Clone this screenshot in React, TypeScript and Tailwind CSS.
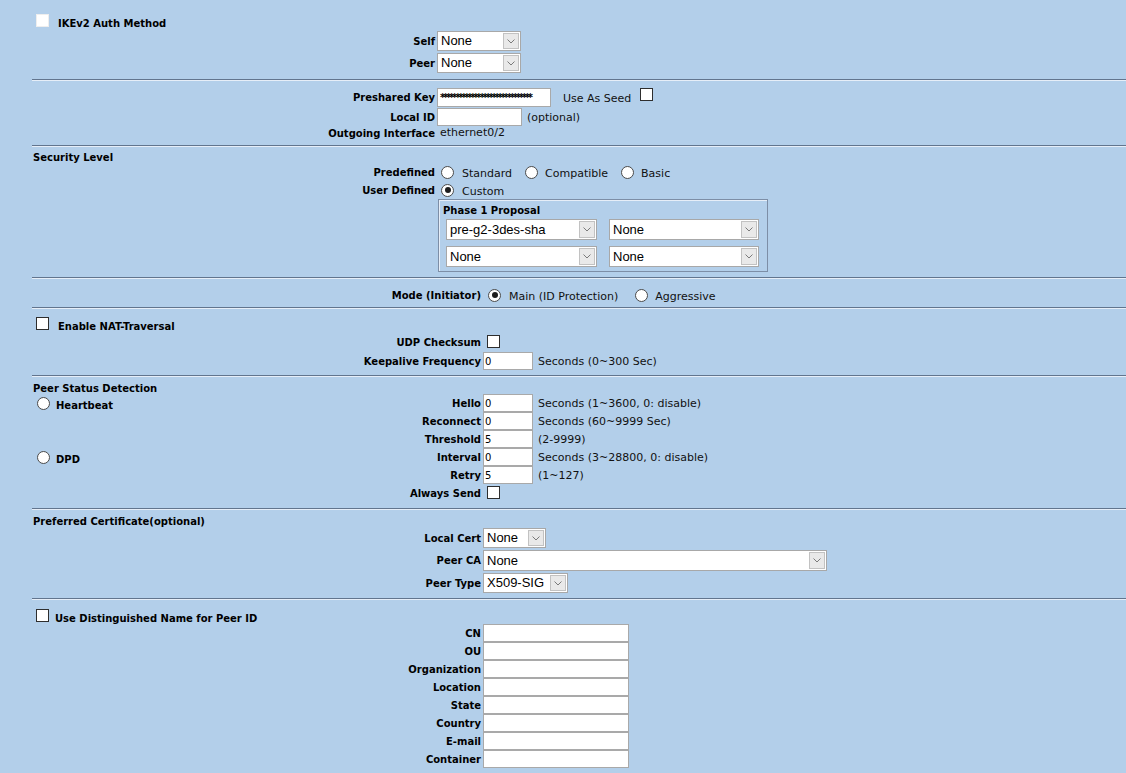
import React from "react";

const bold = "font-['DejaVu_Sans',sans-serif] font-bold text-[10px] text-black whitespace-nowrap";
const plain = "font-['DejaVu_Sans',sans-serif] text-[11px] text-[#111] whitespace-nowrap";

function Sep({ className = "" }: { className?: string }) {
  return (
    <div className={className}>
      <div className="h-px bg-[#62758e]" />
      <div className="h-px bg-[#e6eef8]" />
    </div>
  );
}

function Sel({ className, value }: { className: string; value: string }) {
  return (
    <div className={`flex items-stretch border border-[#a8a8a8] bg-white ${className}`}>
      <span className="flex flex-1 items-center overflow-hidden whitespace-nowrap pl-[3px] font-['Liberation_Sans',Arial,sans-serif] text-[13px] text-black">
        {value}
      </span>
      <span className="m-[1px] flex w-[16px] flex-none items-center justify-center border border-[#c2c2c2] bg-[#e9e9e9]">
        <svg width="8" height="5" viewBox="0 0 8 5">
          <path d="M0.5 0.5 L4 4 L7.5 0.5" stroke="#7a7a7a" fill="none" strokeWidth="1" />
        </svg>
      </span>
    </div>
  );
}

function Inp({ className, value = "" }: { className: string; value?: string }) {
  return (
    <div
      className={`flex items-center overflow-hidden border border-[#a9a9a9] bg-white pl-[1px] font-['DejaVu_Sans',sans-serif] text-[10px] text-black ${className}`}
    >
      {value}
    </div>
  );
}

function Radio({ checked = false }: { checked?: boolean }) {
  return (
    <span className="flex h-[13px] w-[13px] flex-none items-center justify-center rounded-full border border-[#4a4a4a] bg-white">
      {checked ? <span className="h-[6px] w-[6px] rounded-full bg-[#1e1e1e]" /> : null}
    </span>
  );
}

function Check({ light = false }: { light?: boolean }) {
  return (
    <span
      className={`inline-block h-[13px] w-[13px] flex-none bg-white ${light ? "border border-[#eeeeee]" : "border border-[#2e2e2e]"}`}
    />
  );
}

function Row({ label, wide = true, left, children, className = "h-[18px]" }: {
  label: string;
  wide?: boolean;
  left?: React.ReactNode;
  children?: React.ReactNode;
  className?: string;
}) {
  return (
    <div className={`flex items-center ${className}`}>
      <div className={`flex items-center justify-between ${wide ? "w-[449px]" : "w-[403px]"}`}>
        <div className="flex items-center">{left}</div>
        <span className={bold}>{label}</span>
      </div>
      {children}
    </div>
  );
}

function CheckTitle({ label, gap, className }: { label: string; gap: string; className: string }) {
  return (
    <div className={`flex items-start pl-[4px] ${className}`}>
      <Check light={label.startsWith("IKEv2")} />
      <span className={`${bold} mt-[5px] leading-none ${gap}`}>{label}</span>
    </div>
  );
}

function Note({ children }: { children: React.ReactNode }) {
  return <span className={`${plain} ml-[5px] pt-[2px]`}>{children}</span>;
}

export default function App() {
  return (
    <div className="min-h-screen overflow-hidden bg-[#b3cfea] pl-8">
      {/* IKEv2 */}
      <CheckTitle label="IKEv2 Auth Method" gap="ml-[9px]" className="mt-[14px] h-[16px]" />
      <div className="mt-[1px] flex flex-col gap-[2px]">
        <Row label="Self" wide={false} className="h-[20px]">
          <Sel className="ml-[2px] h-[20px] w-[84px]" value="None" />
        </Row>
        <Row label="Peer" wide={false} className="h-[20px]">
          <Sel className="ml-[2px] h-[20px] w-[84px]" value="None" />
        </Row>
      </div>
      <Sep className="mt-[6px]" />

      {/* preshared */}
      <div className="mt-[7px]">
        <Row label="Preshared Key" wide={false} className="h-[19px]">
          <div className="ml-[2px] flex h-[19px] w-[114px] items-center overflow-hidden border border-[#a9a9a9] bg-white pl-[2px] font-['DejaVu_Sans',sans-serif] text-[10px] font-bold leading-none tracking-[-2.2px] text-black">
            ******************************
          </div>
          <span className={`${plain} ml-[12px] pt-[4px]`}>Use As Seed</span>
          <span className="ml-[9px] mb-[5px]">
            <Check />
          </span>
        </Row>
        <Row label="Local ID" wide={false} className="mt-px h-[18px]">
          <Inp className="ml-[2px] h-[18px] w-[85px]" />
          <Note>(optional)</Note>
        </Row>
        <Row label="Outgoing Interface" wide={false} className="h-[14px]">
          <span className={`${plain} ml-[5px]`}>ethernet0/2</span>
        </Row>
      </div>
      <Sep className="mt-[5px]" />

      {/* security level */}
      <div className={`${bold} mt-[3px] flex h-[14px] items-center pl-px`}>Security Level</div>
      <Row label="Predefined" wide={false} className="h-[16px]">
        <span className="ml-[6px]"><Radio /></span>
        <span className={`${plain} ml-[8px] pt-[5px]`}>Standard</span>
        <span className="ml-[13px]"><Radio /></span>
        <span className={`${plain} ml-[7px] pt-[5px]`}>Compatible</span>
        <span className="ml-[13px]"><Radio /></span>
        <span className={`${plain} ml-[7px] pt-[5px]`}>Basic</span>
      </Row>
      <Row label="User Defined" wide={false} className="mt-[2px] h-[16px]">
        <span className="ml-[6px]"><Radio checked /></span>
        <span className={`${plain} ml-[8px] pt-[5px]`}>Custom</span>
      </Row>
      <div className="ml-[406px] mt-px w-[330px] border border-[#7d8ea6] pb-[4px] pl-[7px] pr-[8px] shadow-[inset_1px_1px_0_#e6eef8]">
        <div className={`${bold} -ml-[3px] flex h-[19px] items-center pt-[2px]`}>Phase 1 Proposal</div>
        <div className="flex gap-[12px]">
          <Sel className="h-[21px] w-[151px]" value="pre-g2-3des-sha" />
          <Sel className="h-[21px] w-[150px]" value="None" />
        </div>
        <div className="mt-[6px] flex gap-[12px]">
          <Sel className="h-[21px] w-[151px]" value="None" />
          <Sel className="h-[21px] w-[150px]" value="None" />
        </div>
      </div>
      <Sep className="mt-[5px]" />

      {/* mode */}
      <Row label="Mode (Initiator)" className="mt-[8px] h-[16px]">
        <span className="ml-[7px]"><Radio checked /></span>
        <span className={`${plain} ml-[8px] pt-[5px]`}>Main (ID Protection)</span>
        <span className="ml-[17px]"><Radio /></span>
        <span className={`${plain} ml-[7px] pt-[5px]`}>Aggressive</span>
      </Row>
      <Sep className="mt-[4px]" />

      {/* NAT */}
      <CheckTitle label="Enable NAT-Traversal" gap="ml-[9px]" className="mt-[8px] h-[16px]" />
      <Row label="UDP Checksum" className="mt-[2px] h-[14px]">
        <span className="ml-[6px]"><Check /></span>
      </Row>
      <Row label="Keepalive Frequency" className="mt-[3px] h-[18px]">
        <Inp className="ml-[2px] h-[18px] w-[50px]" value="0" />
        <Note>Seconds (0~300 Sec)</Note>
      </Row>
      <Sep className="mt-[5px]" />

      {/* peer status */}
      <div className={`${bold} mt-[5px] flex h-[12px] items-center pl-px`}>Peer Status Detection</div>
      <Row
        label="Hello"
        left={
          <div className="flex items-center pl-[5px]">
            <Radio />
            <span className={`${bold} ml-[6px] pt-[5px]`}>Heartbeat</span>
          </div>
        }
      >
        <Inp className="ml-[2px] h-[18px] w-[50px]" value="0" />
        <Note>Seconds (1~3600, 0: disable)</Note>
      </Row>
      <Row label="Reconnect">
        <Inp className="ml-[2px] h-[18px] w-[50px]" value="0" />
        <Note>Seconds (60~9999 Sec)</Note>
      </Row>
      <Row label="Threshold">
        <Inp className="ml-[2px] h-[18px] w-[50px]" value="5" />
        <Note>(2-9999)</Note>
      </Row>
      <Row
        label="Interval"
        left={
          <div className="flex items-center pl-[5px]">
            <Radio />
            <span className={`${bold} ml-[6px] pt-[5px]`}>DPD</span>
          </div>
        }
      >
        <Inp className="ml-[2px] h-[18px] w-[50px]" value="0" />
        <Note>Seconds (3~28800, 0: disable)</Note>
      </Row>
      <Row label="Retry">
        <Inp className="ml-[2px] h-[18px] w-[50px]" value="5" />
        <Note>(1~127)</Note>
      </Row>
      <Row label="Always Send">
        <span className="ml-[6px]"><Check /></span>
      </Row>
      <Sep className="mt-[6px]" />

      {/* certificate */}
      <div className={`${bold} mt-[4px] flex h-[14px] items-center pl-px`}>Preferred Certificate(optional)</div>
      <div className="flex flex-col gap-[2px]">
        <Row label="Local Cert" className="h-[20px]">
          <Sel className="ml-[2px] h-[20px] w-[63px]" value="None" />
        </Row>
        <Row label="Peer CA" className="h-[21px]">
          <Sel className="ml-[2px] h-[21px] w-[344px]" value="None" />
        </Row>
        <Row label="Peer Type" className="h-[20px]">
          <Sel className="ml-[2px] h-[20px] w-[85px]" value="X509-SIG" />
        </Row>
      </div>
      <Sep className="mt-[5px]" />

      {/* DN */}
      <CheckTitle label="Use Distinguished Name for Peer ID" gap="ml-[6px]" className="mt-[9px] h-[15px]" />
      <div>
        {["CN", "OU", "Organization", "Location", "State", "Country", "E-mail", "Container"].map((l) => (
          <Row key={l} label={l}>
            <Inp className="ml-[2px] h-[18px] w-[146px]" />
          </Row>
        ))}
      </div>
    </div>
  );
}
